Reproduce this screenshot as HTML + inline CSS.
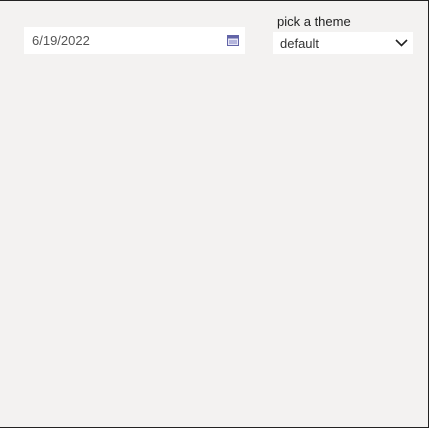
<!DOCTYPE html>
<html><head><style>
body{margin:0;width:429px;height:428px;background:#f3f2f1;position:relative;overflow:hidden;font-family:"Liberation Sans",sans-serif;}
.top{position:absolute;left:0;top:0;width:429px;height:1px;background:#222;}
.bot{position:absolute;left:0;top:427px;width:429px;height:1px;background:#222;}
.rt{position:absolute;left:428px;top:0;width:1px;height:428px;background:#222;}
.date{position:absolute;left:24px;top:27px;width:221px;height:27px;background:#fff;}
.date span{position:absolute;left:8px;top:6px;font-size:13px;color:#555;}
.lbl{position:absolute;left:277px;top:14px;font-size:13px;color:#222;}
.dd{position:absolute;left:273px;top:32px;width:140px;height:22px;background:#fff;}
.dd span{position:absolute;left:7px;top:4px;font-size:13px;color:#333;}
</style></head><body>
<div class="top"></div><div class="bot"></div><div class="rt"></div>
<div class="date"><span>6/19/2022</span>
<svg style="position:absolute;left:203px;top:8px" width="12" height="11" viewBox="0 0 12 11"><rect x="0.5" y="0.5" width="11" height="10" fill="#e8e8f6" stroke="#6264a7"/><rect x="0.5" y="0.5" width="11" height="3" fill="#6264a7"/><rect x="2" y="5" width="8" height="4" fill="#b4b5dc"/></svg></div>
<div class="lbl">pick a theme</div>
<div class="dd"><span>default</span>
<svg style="position:absolute;left:122px;top:7px" width="13" height="8" viewBox="0 0 13 8"><path d="M1 1 L6.5 6.5 L12 1" fill="none" stroke="#222" stroke-width="1.6"/></svg></div>
</body></html>
